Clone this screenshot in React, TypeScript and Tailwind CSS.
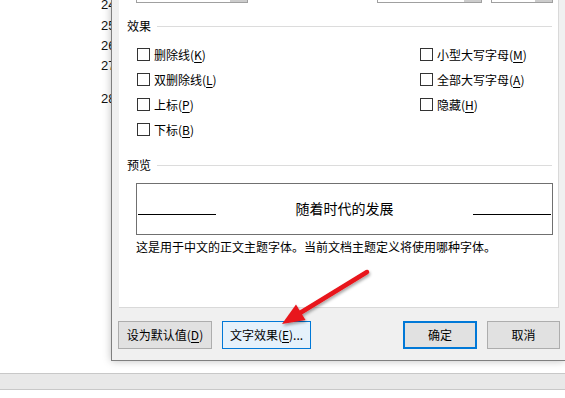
import React from "react";

const font = "font-['Noto_Sans_CJK_SC','Microsoft_YaHei',sans-serif]";

function Key({ children }: { children: React.ReactNode }) {
  return <span className="underline underline-offset-[2px] decoration-[1px]">{children}</span>;
}

function Check({ label, k }: { label: string; k: string }) {
  return (
    <div className="flex items-center h-[25px]">
      <div className="w-[13px] h-[13px] border border-[#333333] bg-white" />
      <span className="ml-[4px] text-[12px] leading-[16px] text-black">
        {label}(<Key>{k}</Key>)
      </span>
    </div>
  );
}

function Section({ title }: { title: string }) {
  return (
    <div className="flex items-center h-[14px] pl-[8px] pr-[6px]">
      <span className="text-[12px] leading-[14px] text-black">{title}</span>
      <div className="ml-[6px] flex-1 h-px bg-[#dcdcdc]" />
    </div>
  );
}

function Combo({ w, btn, className }: { w: string; btn: string; className: string }) {
  return (
    <div className={`${w} ${className} h-[3px] border-x border-b border-[#a0a0a0] bg-white flex justify-end`}>
      <div className={`${btn} h-full bg-[#cccccc]`} />
    </div>
  );
}

export default function App() {
  return (
    <div className={`relative w-[565px] h-[398px] overflow-hidden bg-white ${font}`}>
      <div className="flex h-[361px]">
        {/* document behind the dialog */}
        <div className="relative z-20 w-[111px] shrink-0 overflow-hidden pl-[101px] font-['Liberation_Sans',sans-serif] text-[13px] leading-[14px] text-[#111]">
          <div className="mt-[-2px]">24</div>
          <div className="mt-[7px]">25</div>
          <div className="mt-[6px]">26</div>
          <div className="mt-[6px]">27</div>
          <div className="mt-[19px]">28</div>
        </div>

        {/* font dialog */}
        <div className="relative z-10 w-[454px] shrink-0 bg-[#f0f0f0] border-l border-b border-[#7f7f7f] shadow-[0_0_8px_rgba(0,0,0,0.25)] flex flex-col">
          <div className="ml-[7px] w-[440px] h-[308px] bg-white border-r border-b border-[#d9d9d9] flex flex-col">
            <div className="flex">
              <Combo w="w-[112px]" btn="w-[17px]" className="ml-[17px]" />
              <Combo w="w-[105px]" btn="w-[17px]" className="ml-[129px]" />
              <Combo w="w-[62px]" btn="w-[17px]" className="ml-[9px]" />
            </div>

            <div className="mt-[16px]">
              <Section title="效果" />
            </div>

            <div className="mt-[9px] pl-[18px] grid grid-cols-[283px_1fr]">
              <div className="flex flex-col">
                <Check label="删除线" k="K" />
                <Check label="双删除线" k="L" />
                <Check label="上标" k="P" />
                <Check label="下标" k="B" />
              </div>
              <div className="flex flex-col">
                <Check label="小型大写字母" k="M" />
                <Check label="全部大写字母" k="A" />
                <Check label="隐藏" k="H" />
              </div>
            </div>

            <div className="mt-[16px]">
              <Section title="预览" />
            </div>

            <div className="mt-[11px] ml-[17px] w-[417px] h-[52px] border border-[#707070] flex items-start">
              <div className="ml-[1px] mt-[30px] w-[78px] h-px bg-black" />
              <div className="flex-1 mt-[14px] text-center text-[14px] leading-[20px] text-black">随着时代的发展</div>
              <div className="mr-[1px] mt-[30px] w-[78px] h-px bg-black" />
            </div>

            <div className="mt-[4px] ml-[17px] text-[12px] leading-[16px] text-black">
              这是用于中文的正文主题字体。当前文档主题定义将使用哪种字体。
            </div>
          </div>

          <div className="mt-[13px] flex text-[12px] text-black">
            <button className="ml-[6px] w-[94px] h-[28px] bg-[#e1e1e1] border border-[#adadad] leading-[16px]">
              设为默认值(<Key>D</Key>)
            </button>
            <button className="ml-[10px] w-[89px] h-[28px] bg-[#e5f1fb] border border-[#0078d7] leading-[16px]">
              文字效果(<Key>E</Key>)...
            </button>
            <button className="ml-[92px] w-[74px] h-[28px] bg-[#e1e1e1] border-2 border-[#0078d7] leading-[16px]">
              确定
            </button>
            <button className="ml-[10px] w-[73px] h-[28px] bg-[#e1e1e1] border border-[#adadad] leading-[16px]">
              取消
            </button>
          </div>
        </div>
      </div>

      {/* status bar of the document window */}
      <div className="mt-[12px] h-[17px] bg-[#e8e8e8] border-t border-b border-[#c8c8c8]" />

      {/* red annotation arrow */}
      <svg className="absolute inset-0 pointer-events-none z-30" width="565" height="398" viewBox="0 0 565 398">
        <defs>
          <filter id="sh" x="-20%" y="-20%" width="140%" height="140%">
            <feDropShadow dx="1" dy="2" stdDeviation="1.5" floodColor="#000" floodOpacity="0.35" />
          </filter>
        </defs>
        <g filter="url(#sh)">
          <line x1="367" y1="272" x2="300" y2="313" stroke="#e8141a" strokeWidth="4.5" strokeLinecap="round" />
          <polygon points="282,324 305.5,320 296,304.5" fill="#e8141a" />
        </g>
      </svg>
    </div>
  );
}
